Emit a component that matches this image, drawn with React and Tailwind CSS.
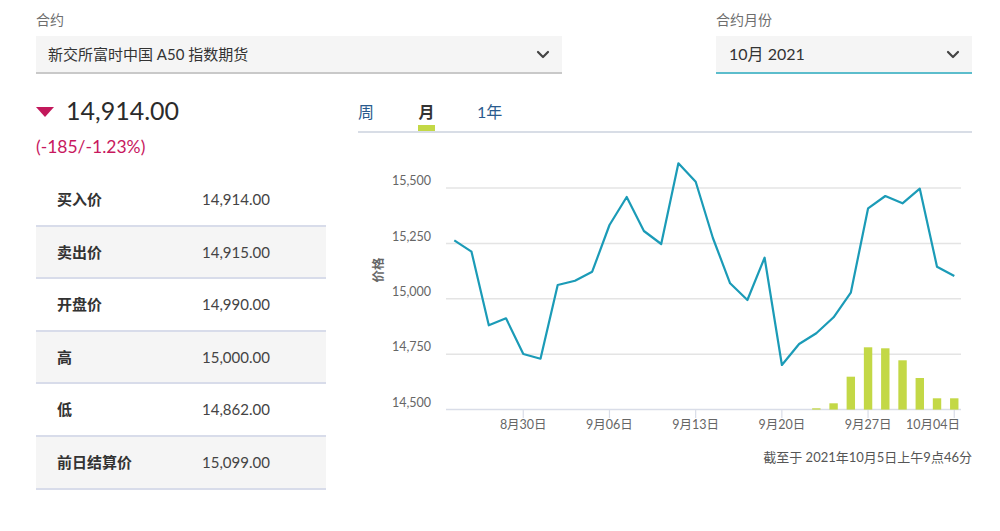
import React from "react";

const ys = [240.3, 251.7, 325.3, 318.3, 354, 358.7, 285, 280.7, 271.7, 225, 197, 231, 244, 163.3, 181.7, 238, 283.3, 300, 257.7, 365, 344, 333.3, 317.3, 292.7, 208.3, 196, 203.3, 188.7, 266.7, 276];
const xAt = (i) => 454.3 + 17.24 * i;
const bars = [[21, 408.3], [22, 403.3], [23, 376.7], [24, 347.3], [25, 348.3], [26, 360.3], [27, 378], [28, 398.3], [29, 398.3]];
const grid = [[188, "15,500"], [243.5, "15,250"], [298.8, "15,000"], [354.2, "14,750"], [409.6, "14,500"]];
const ticks = [[4, "8月30日"], [9, "9月06日"], [14, "9月13日"], [19, "9月20日"], [24, "9月27日"], [29, "10月04日"]];
const FONT = "Lato, 'Noto Sans CJK SC', sans-serif";

function Chevron() {
  return (
    <svg width="14" height="9" viewBox="0 0 14 9" fill="none">
      <path d="M2 2 L7 7 L12 2" stroke="#444" strokeWidth="2.2" strokeLinecap="round" strokeLinejoin="round" />
    </svg>
  );
}

function Chart() {
  const pts = ys.map((y, i) => `${xAt(i).toFixed(1)},${y}`).join(" ");
  return (
    <svg width="614" height="307" viewBox="358 133 614 307" fontFamily={FONT} className="block">
      {grid.map(([y, label]) => (
        <g key={label}>
          <line x1="446" x2="961" y1={y} y2={y} stroke={label === "14,500" ? "#d9dde8" : "#e4e4e4"} strokeWidth="1.5" />
          <text x="431" y={y - 3} textAnchor="end" fontSize="12.5" fill="#666">{label}</text>
        </g>
      ))}
      <text transform="translate(383 270) rotate(-90)" textAnchor="middle" fontSize="12.5" fontWeight="700" fill="#666">价格</text>
      {ticks.map(([i, label], k) => (
        <g key={label}>
          <line x1={xAt(i)} x2={xAt(i)} y1="410" y2="418" stroke="#d9dde8" strokeWidth="1.2" />
          <text
            x={k === ticks.length - 1 ? 960 : xAt(i)}
            y="429"
            textAnchor={k === ticks.length - 1 ? "end" : "middle"}
            fontSize="12.5"
            fill="#666"
          >
            {label}
          </text>
        </g>
      ))}
      {bars.map(([i, top]) => (
        <rect key={i} x={xAt(i) - 4.2} y={top} width="8.4" height={409.6 - top} fill="#c3d846" />
      ))}
      <polyline points={pts} fill="none" stroke="#1b9bb7" strokeWidth="2.2" strokeLinejoin="round" />
    </svg>
  );
}

const rows = [
  ["买入价", "14,914.00"],
  ["卖出价", "14,915.00"],
  ["开盘价", "14,990.00"],
  ["高", "15,000.00"],
  ["低", "14,862.00"],
  ["前日结算价", "15,099.00"],
];

export default function App() {
  return (
    <div className="w-[1000px] h-[531px] bg-white pl-[36px] pr-[28px] pt-[10px] font-['Lato','Noto_Sans_CJK_SC',sans-serif] text-[#333] overflow-hidden">
      <div className="flex justify-between">
        <div className="w-[526px]">
          <div className="text-[14px] leading-[20px] text-[#6e6e6e] mb-[6px]">合约</div>
          <div className="h-[38px] bg-[#f5f5f5] border-b-2 border-[#c9c9c9] flex items-center justify-between pl-[12px] pr-[12px]">
            <span className="text-[15px] text-[#333]">新交所富时中国 A50 指数期货</span>
            <Chevron />
          </div>
        </div>
        <div className="w-[256px]">
          <div className="text-[14px] leading-[20px] text-[#6e6e6e] mb-[6px]">合约月份</div>
          <div className="h-[38px] bg-[#f5f5f5] border-b-2 border-[#5cbdcc] flex items-center justify-between pl-[13px] pr-[12px]">
            <span className="text-[16px] text-[#333]">10月 2021</span>
            <Chevron />
          </div>
        </div>
      </div>

      <div className="flex mt-[20px]">
        <div className="w-[290px]">
          <div className="h-[32px] flex items-center">
            <svg width="18" height="10" viewBox="0 0 18 10" className="mr-[12px] mt-[3px]">
              <path d="M0 0 L18 0 L9 10 Z" fill="#c2185b" />
            </svg>
            <span className="text-[25px] leading-[32px] text-[#2b2b2b]">14,914.00</span>
          </div>
          <div className="mt-[9px] text-[17.5px] leading-[24px] text-[#c8185e]">(-185/-1.23%)</div>
          <div className="mt-[15px]">
            {rows.map(([k, v], i) => (
              <div key={k} className={`h-[52.6px] flex items-center border-b-2 border-[#d8dcea] ${i % 2 === 1 ? "bg-[#f5f5f5]" : "bg-white"}`}>
                <span className="w-[166px] pl-[21px] text-[15px] font-bold text-[#333]">{k}</span>
                <span className="text-[15px] text-[#444]">{v}</span>
              </div>
            ))}
          </div>
        </div>

        <div className="ml-[32px] flex-1">
          <div className="h-[39px] border-b-2 border-[#d8dde6] flex items-start">
            <div className="w-[16px] flex flex-col items-center pt-[6px]">
              <span className="text-[16px] leading-[24px] text-[#2a5b8e]">周</span>
            </div>
            <div className="ml-[44px] w-[17px] flex flex-col items-center pt-[6px]">
              <span className="text-[16px] leading-[24px] font-bold text-[#333]">月</span>
              <div className="mt-[1px] w-[17px] h-[6px] bg-[#c3d846]" />
            </div>
            <div className="ml-[42px] flex flex-col items-center pt-[6px]">
              <span className="text-[16px] leading-[24px] text-[#2a5b8e]">1年</span>
            </div>
          </div>
          <Chart />
          <div className="mt-[9px] text-right text-[13px] leading-[16px] text-[#555]">截至于 2021年10月5日上午9点46分</div>
        </div>
      </div>
    </div>
  );
}
